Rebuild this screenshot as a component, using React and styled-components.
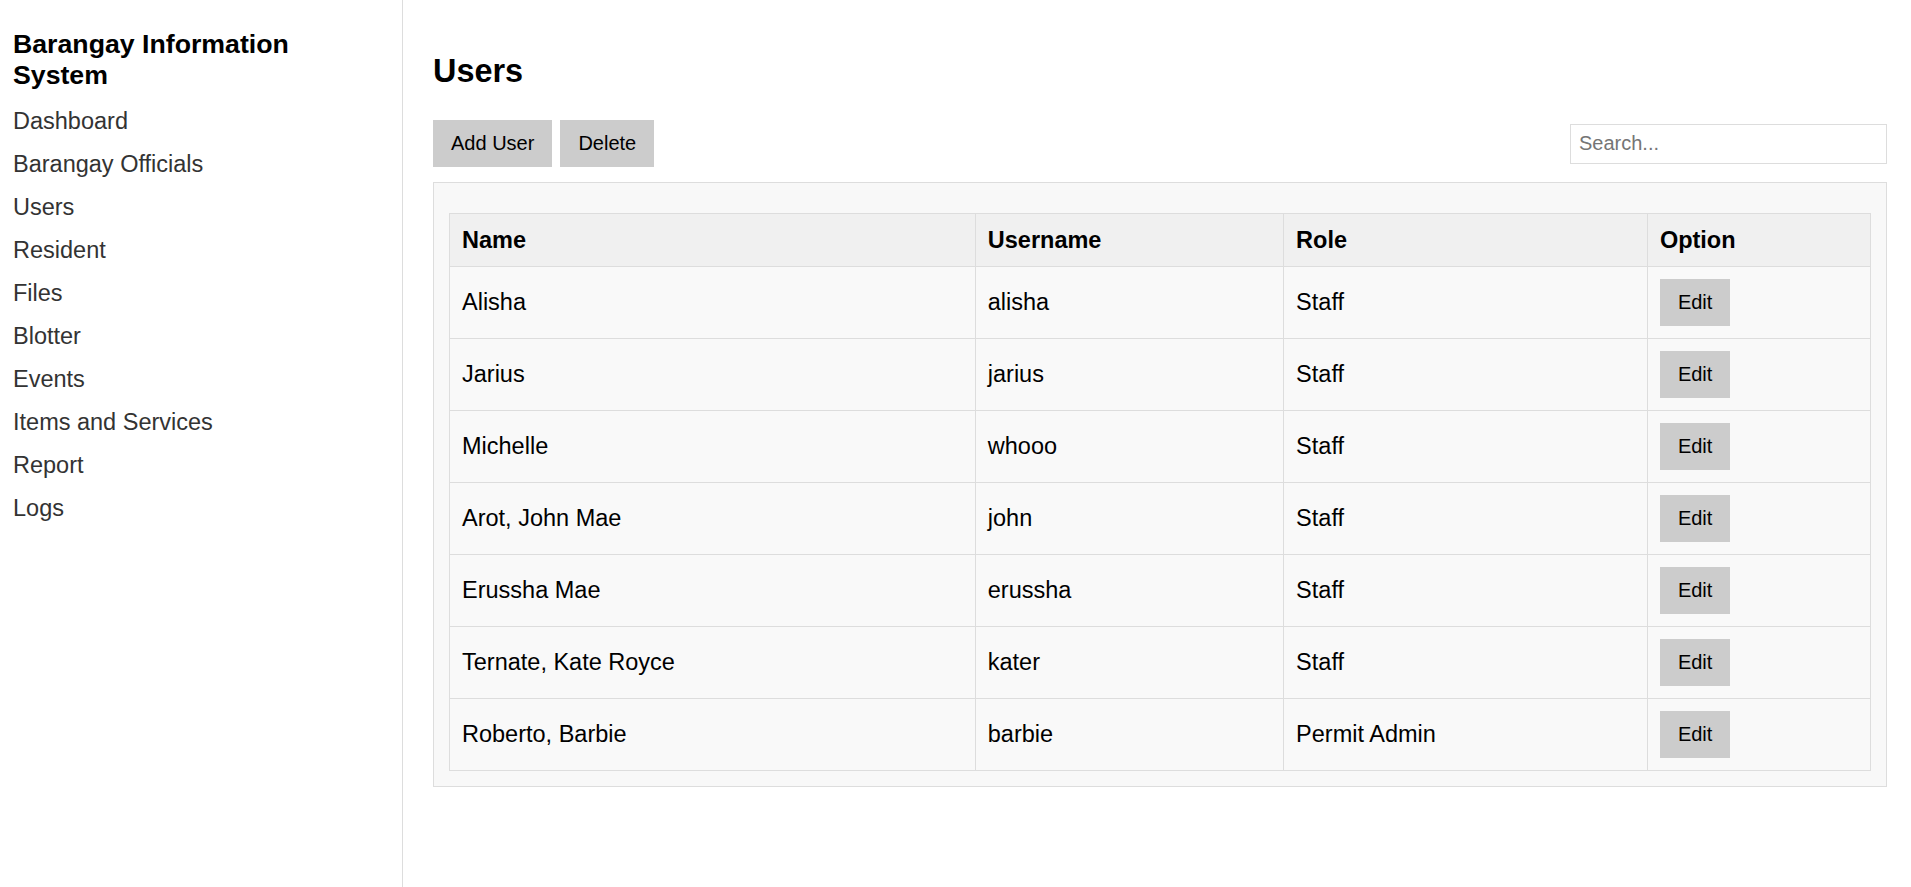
import React from "react";
import styled, { createGlobalStyle } from "styled-components";

const GlobalStyle = createGlobalStyle`
  html, body {
    margin: 0;
    padding: 0;
    background: #ffffff;
    font-family: "Liberation Sans", Arial, sans-serif;
  }
  * { box-sizing: border-box; }
`;

const Layout = styled.div`
  display: flex;
  min-height: 100vh;
`;

const Sidebar = styled.aside`
  width: 403px;
  flex-shrink: 0;
  border-right: 1px solid #dddddd;
  padding: 29px 13px;
  background: #ffffff;
`;

const Brand = styled.h2`
  margin: 0 0 9px;
  max-width: 330px;
  font-size: 26.7px;
  line-height: 31px;
  font-weight: 700;
  color: #000000;
`;

const NavList = styled.nav`
  display: flex;
  flex-direction: column;
`;

const NavLink = styled.a`
  display: block;
  padding: 8px 0;
  font-size: 23.5px;
  line-height: 27px;
  color: #333333;
  text-decoration: none;
  cursor: pointer;
`;

const Main = styled.main`
  flex: 1;
  min-width: 0;
  padding: 30px 24px 30px 30px;
`;

const Heading = styled.h1`
  margin: 23px 0 30px;
  font-size: 32.4px;
  line-height: 37px;
  font-weight: 700;
  color: #000000;
`;

const Toolbar = styled.div`
  display: flex;
  align-items: center;
  justify-content: space-between;
  margin-bottom: 15px;
`;

const ButtonGroup = styled.div`
  display: flex;
  gap: 8px;
`;

const Button = styled.button`
  border: none;
  background: #cccccc;
  color: #000000;
  font-family: "Liberation Sans", Arial, sans-serif;
  font-size: 20px;
  line-height: 23px;
  padding: 12px 18px;
  cursor: pointer;
`;

const SearchInput = styled.input`
  width: 317px;
  height: 40px;
  border: 1px solid #dddddd;
  padding: 0 8px;
  font-family: "Liberation Sans", Arial, sans-serif;
  font-size: 20px;
  color: #000000;
  outline: none;
  &::placeholder {
    color: #757575;
  }
`;

const Panel = styled.section`
  background: #f8f8f8;
  border: 1px solid #dddddd;
  padding: 15px;
`;

const Table = styled.table`
  width: 100%;
  margin-top: 15px;
  border-collapse: collapse;
  table-layout: fixed;
  background: #f9f9f9;
`;

const HeadCell = styled.th`
  text-align: left;
  font-weight: 700;
  font-size: 23.5px;
  line-height: 27px;
  padding: 13px 12px 12px;
  background: #f0f0f0;
  border: 1px solid #dddddd;
  color: #000000;
`;

const Cell = styled.td`
  font-size: 23.5px;
  line-height: 27px;
  padding: 12px;
  height: 72px;
  border: 1px solid #dddddd;
  color: #000000;
  vertical-align: middle;
`;

const navItems = [
  "Dashboard",
  "Barangay Officials",
  "Users",
  "Resident",
  "Files",
  "Blotter",
  "Events",
  "Items and Services",
  "Report",
  "Logs",
];

const users = [
  { name: "Alisha", username: "alisha", role: "Staff" },
  { name: "Jarius", username: "jarius", role: "Staff" },
  { name: "Michelle", username: "whooo", role: "Staff" },
  { name: "Arot, John Mae", username: "john", role: "Staff" },
  { name: "Erussha Mae", username: "erussha", role: "Staff" },
  { name: "Ternate, Kate Royce", username: "kater", role: "Staff" },
  { name: "Roberto, Barbie", username: "barbie", role: "Permit Admin" },
];

export default function App() {
  return (
    <>
      <GlobalStyle />
      <Layout>
        <Sidebar>
          <Brand>Barangay Information System</Brand>
          <NavList>
            {navItems.map((item) => (
              <NavLink key={item}>{item}</NavLink>
            ))}
          </NavList>
        </Sidebar>
        <Main>
          <Heading>Users</Heading>
          <Toolbar>
            <ButtonGroup>
              <Button>Add User</Button>
              <Button>Delete</Button>
            </ButtonGroup>
            <SearchInput placeholder="Search..." />
          </Toolbar>
          <Panel>
            <Table>
              <colgroup>
                <col style={{ width: "37%" }} />
                <col style={{ width: "21.7%" }} />
                <col style={{ width: "25.6%" }} />
                <col style={{ width: "15.7%" }} />
              </colgroup>
              <thead>
                <tr>
                  <HeadCell>Name</HeadCell>
                  <HeadCell>Username</HeadCell>
                  <HeadCell>Role</HeadCell>
                  <HeadCell>Option</HeadCell>
                </tr>
              </thead>
              <tbody>
                {users.map((u) => (
                  <tr key={u.username}>
                    <Cell>{u.name}</Cell>
                    <Cell>{u.username}</Cell>
                    <Cell>{u.role}</Cell>
                    <Cell>
                      <Button>Edit</Button>
                    </Cell>
                  </tr>
                ))}
              </tbody>
            </Table>
          </Panel>
        </Main>
      </Layout>
    </>
  );
}
